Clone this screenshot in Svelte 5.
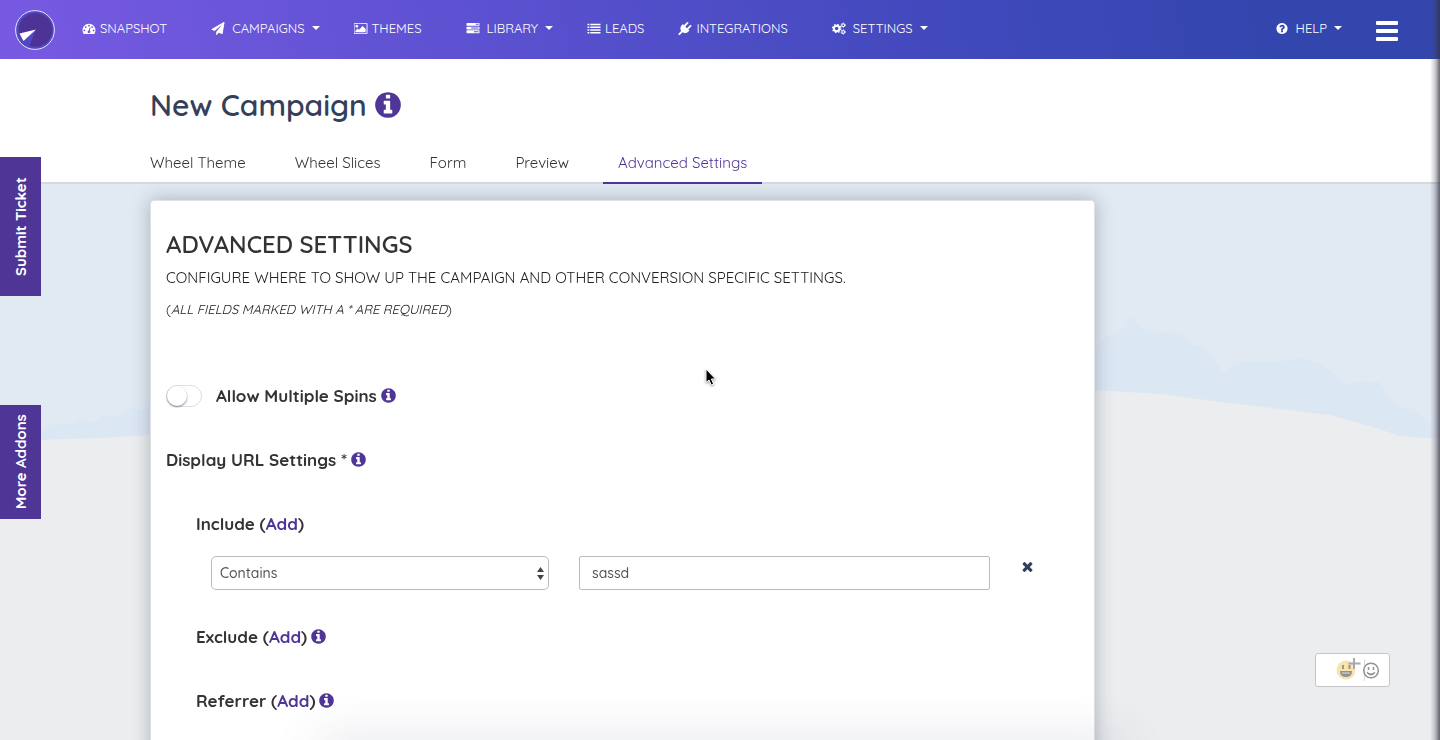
<script lang="ts">
  const icons = {
    dashboard: "M384 1152q0-53-37.5-90.5t-90.5-37.5-90.5 37.5-37.5 90.5 37.5 90.5 90.5 37.5 90.5-37.5 37.5-90.5zm192-448q0-53-37.5-90.5t-90.5-37.5-90.5 37.5-37.5 90.5 37.5 90.5 90.5 37.5 90.5-37.5 37.5-90.5zm428 481l101-382q6-26-7.5-48.5t-38.5-29.5-48 6.5-30 39.5l-101 382q-60 5-107 43.5t-63 98.5q-20 77 20 146t117 89 146-20 89-117q16-60-6-117t-72-91zm660-33q0-53-37.5-90.5t-90.5-37.5-90.5 37.5-37.5 90.5 37.5 90.5 90.5 37.5 90.5-37.5 37.5-90.5zm-640-640q0-53-37.5-90.5t-90.5-37.5-90.5 37.5-37.5 90.5 37.5 90.5 90.5 37.5 90.5-37.5 37.5-90.5zm448 192q0-53-37.5-90.5t-90.5-37.5-90.5 37.5-37.5 90.5 37.5 90.5 90.5 37.5 90.5-37.5 37.5-90.5zm320 448q0 261-141 483-19 29-54 29h-1402q-35 0-54-29-141-221-141-483 0-182 71-348t191-286 286-191 348-71 348 71 286 191 191 286 71 348z",
    plane: "M1764 11q33 24 27 64l-256 1536q-5 29-32 45-14 8-31 8-11 0-24-5l-453-185-242 295q-18 23-49 23-13 0-22-4-19-7-30.5-23.5t-11.5-36.5v-349l864-1059-1069 925-395-162q-37-14-40-55-2-40 32-59l1664-960q15-9 32-9 20 0 36 11z",
    picture: "M576 576q0 80-56 136t-136 56-136-56-56-136 56-136 136-56 136 56 56 136zm1024 384v448h-1408v-192l320-320 160 160 512-512zm96-704h-1600q-13 0-22.5 9.5t-9.5 22.5v1216q0 13 9.5 22.5t22.5 9.5h1600q13 0 22.5-9.5t9.5-22.5v-1216q0-13-9.5-22.5t-22.5-9.5zm160 32v1216q0 66-47 113t-113 47h-1600q-66 0-113-47t-47-113v-1216q0-66 47-113t113-47h1600q66 0 113 47t47 113z",
    plug: "M1755 453q37 38 37 90.5t-37 90.5l-401 400 150 150-160 160q-163 163-389.5 186.5t-411.5-100.5l-362 362h-181v-181l362-362q-124-185-100.5-411.5t186.5-389.5l160-160 150 150 400-401q38-37 91-37t90 37 37 90.5-37 90.5l-400 401 234 234 401-400q38-37 91-37t90 37z",
    info: "M1152 1376v-160q0-14-9-23t-23-9h-96v-512q0-14-9-23t-23-9h-320q-14 0-23 9t-9 23v160q0 14 9 23t23 9h96v320h-96q-14 0-23 9t-9 23v160q0 14 9 23t23 9h448q14 0 23-9t9-23zm-128-896v-160q0-14-9-23t-23-9h-192q-14 0-23 9t-9 23v160q0 14 9 23t23 9h192q14 0 23-9t9-23zm640 416q0 209-103 385.5t-279.5 279.5-385.5 103-385.5-103-279.5-279.5-103-385.5 103-385.5 279.5-279.5 385.5-103 385.5 103 279.5 279.5 103 385.5z",
    question: "M1024 1376v-192q0-14-9-23t-23-9h-192q-14 0-23 9t-9 23v192q0 14 9 23t23 9h192q14 0 23-9t9-23zm256-672q0-88-55.5-163t-138.5-116-170-41q-243 0-371 213-15 24 8 42l132 100q7 6 19 6 16 0 25-12 53-68 86-92 34-24 86-24 48 0 85.5 26t37.5 59q0 38-20 61t-68 45q-63 28-115.5 86.5t-52.5 125.5v36q0 14 9 23t23 9h192q14 0 23-9t9-23q0-19 21.5-49.5t54.5-49.5q32-18 49-28.5t46-35 44.5-48 28-60.5 12.5-81zm384 192q0 209-103 385.5t-279.5 279.5-385.5 103-385.5-103-279.5-279.5-103-385.5 103-385.5 279.5-279.5 385.5-103 385.5 103 279.5 279.5 103 385.5z",
    times: "M1490 1322q0 40-28 68l-136 136q-28 28-68 28t-68-28l-294-294-294 294q-28 28-68 28t-68-28l-136-136q-28-28-28-68t28-68l294-294-294-294q-28-28-28-68t28-68l136-136q28-28 68-28t68 28l294 294 294-294q28-28 68-28t68 28l136 136q28 28 28 68t-28 68l-294 294 294 294q28 28 28 68z",
    list: "M0 240h256v192h-256zM384 240h1408v192h-1408zM0 624h256v192h-256zM384 624h1408v192h-1408zM0 1008h256v192h-256zM384 1008h1408v192h-1408zM0 1392h256v192h-256zM384 1392h1408v192h-1408z",
    tasks: "M1024 1408h640v-128h-640v128zm-384-512h1024v-128h-1024v128zm640-512h384v-128h-384v128zm512 832v256q0 26-19 45t-45 19h-1664q-26 0-45-19t-19-45v-256q0-26 19-45t45-19h1664q26 0 45 19t19 45zm0-512v256q0 26-19 45t-45 19h-1664q-26 0-45-19t-19-45v-256q0-26 19-45t45-19h1664q26 0 45 19t19 45zm0-512v256q0 26-19 45t-45 19h-1664q-26 0-45-19t-19-45v-256q0-26 19-45t45-19h1664q26 0 45 19t19 45z",
  };

  const menu = [
    { label: "Snapshot", icon: "dashboard", dropdown: false },
    { label: "Campaigns", icon: "plane", dropdown: true },
    { label: "Themes", icon: "picture", dropdown: false },
    { label: "Library", icon: "tasks", dropdown: true },
    { label: "Leads", icon: "list", dropdown: false },
    { label: "Integrations", icon: "plug", dropdown: false },
    { label: "Settings", icon: "cogs", dropdown: true },
  ];

  const tabs = ["Wheel Theme", "Wheel Slices", "Form", "Preview", "Advanced Settings"];

  let activeTab = $state("Advanced Settings");
  let multipleSpins = $state(false);
  let rules = $state([{ match: "Contains", value: "sassd" }]);

  function addRule() {
    rules.push({ match: "Contains", value: "" });
  }

  function removeRule(index: number) {
    rules.splice(index, 1);
  }
</script>

{#snippet icon(name: string)}
  {#if name === "cogs"}
    <svg class="icon" viewBox="0 0 15 14" fill="none" stroke="currentColor" aria-hidden="true">
      <circle cx="5" cy="7" r="3" stroke-width="2.2" />
      <circle cx="5" cy="7" r="4.4" stroke-width="1.4" stroke-dasharray="1.73 1.73" />
      <circle cx="12" cy="3.4" r="1.5" stroke-width="1.2" />
      <circle cx="12" cy="3.4" r="2.3" stroke-width="0.9" stroke-dasharray="1.2 1.2" />
      <circle cx="12" cy="10.7" r="1.5" stroke-width="1.2" />
      <circle cx="12" cy="10.7" r="2.3" stroke-width="0.9" stroke-dasharray="1.2 1.2" />
    </svg>
  {:else}
    <svg class="icon" viewBox={name === "picture" ? "0 0 1920 1792" : "0 0 1792 1792"} fill="currentColor" aria-hidden="true">
      <path d={icons[name]} />
    </svg>
  {/if}
{/snippet}

<!-- snowy hill behind the page -->
<svg class="scene" viewBox="0 0 1440 740" preserveAspectRatio="none" aria-hidden="true">
  <rect width="1440" height="740" fill="#e1e9f3" />
  <path fill="#dbe7f3" d="M0 432l20-3 21 1 14-6 14 1 10-5 14 2 12-7 12 1 12-8 14 2 12-8v45H0zM1095 348l12-12 8-4 10-4 8-12 8 13 14 4 14-1 14 4 10 9 12 4 10 12 8 12 12-10 20-2 24 1 20-4 22 6 16 12 8 10 14-5 20 1 10 14 8 10 18 4 14 12 4 22v10H1095z" />
  <path fill="#ebedef" d="M0 442L60 439 100 438 150 435 500 390H1095L1110 391 1160 394 1230 403 1330 415 1370 426 1400 436 1440 439V740H0z" />
</svg>

<nav class="navbar">
  <a class="logo" href="#home" aria-label="Home">
    <svg viewBox="0 0 40 40">
      <circle cx="20" cy="20" r="19.4" fill="#5249c2" stroke="#e7e5fa" />
      <circle cx="20.5" cy="20" r="16.8" fill="#4d3396" />
      <path d="M20.500 20L4.500 25A17 17 0 0 0 14.500 36z" fill="#5249c2" />
      <path d="M21 19.500L4.500 23.500 8.500 31z" fill="#fff" />
    </svg>
  </a>
  <ul class="menu">
    {#each menu as item}
      <li class:dropdown={item.dropdown}>
        <a href="#{item.label.toLowerCase()}">
          {@render icon(item.icon)}
          <span>{item.label}</span>
          {#if item.dropdown}<i class="caret"></i>{/if}
        </a>
      </li>
    {/each}
  </ul>
  <ul class="menu right">
    <li class="dropdown">
      <a href="#help">{@render icon("question")}<span>Help</span><i class="caret"></i></a>
    </li>
  </ul>
  <button class="burger" aria-label="Menu"><i></i><i></i><i></i></button>
</nav>

<header class="page-header">
  <div class="container">
    <h1>New Campaign {@render icon("info")}</h1>
    <div class="tabs">
      {#each tabs as tab}
        <button class:active={tab === activeTab} onclick={() => (activeTab = tab)}>{tab}</button>
      {/each}
    </div>
  </div>
</header>

<main class="container">
  <section class="card">
    <h2>Advanced Settings</h2>
    <p class="lead">Configure where to show up the campaign and other conversion specific settings.</p>
    <p class="note">(<em>All fields marked with a * are required</em>)</p>

    <label class="row switch-row">
      <input class="switch" type="checkbox" bind:checked={multipleSpins} />
      <span>Allow Multiple Spins {@render icon("info")}</span>
    </label>

    <h3 class="row">Display URL Settings * {@render icon("info")}</h3>

    <div class="indent">
      <h3 class="row">Include (<button class="link" onclick={addRule}>Add</button>)</h3>
      {#each rules as rule, i}
        <div class="rule">
          <div class="select">
            <select bind:value={rule.match} aria-label="Match type">
              <option>Contains</option>
              <option>Equals</option>
            </select>
            <svg viewBox="0 0 7 13" aria-hidden="true"><path d="M3.500 0L7 5H0zM3.500 13L0 8H7z" fill="#444" /></svg>
          </div>
          <input type="text" bind:value={rule.value} aria-label="URL" />
          <button class="remove" aria-label="Remove" onclick={() => removeRule(i)}>{@render icon("times")}</button>
        </div>
      {/each}
      <h3 class="row">Exclude (<button class="link">Add</button>) {@render icon("info")}</h3>
      <h3 class="row">Referrer (<button class="link">Add</button>) {@render icon("info")}</h3>
    </div>
  </section>
</main>

<aside class="side-tabs">
  <button class="ticket">Submit Ticket</button>
  <button class="addons">More Addons</button>
</aside>

<button class="reactions" aria-label="Add reaction">
  <svg viewBox="0 0 46 26" fill="none" aria-hidden="true">
    <circle cx="12" cy="13" r="9.500" fill="#f8e3ac" />
    <path d="M9 8v4M15.500 8v4" stroke="#969696" stroke-width="2" />
    <path d="M6 14h12q0 6-6 6t-6-6z" fill="#929292" />
    <path d="M8 16h8" stroke="#ddd" />
    <path d="M20 1v11M14.500 6.500h12" stroke="#a8a8ae" stroke-width="2" />
    <path d="M30.500 2v22" stroke="#d5dde5" />
    <circle cx="37" cy="13.500" r="7.300" stroke="#929292" stroke-width="1.500" />
    <path d="M34.500 10v3M39.500 10v3" stroke="#929292" stroke-width="1.500" />
    <path d="M33 15q4 4 8 0-1 3-4 3t-4-3z" fill="#929292" stroke="#929292" />
  </svg>
</button>

<svg class="cursor" viewBox="0 0 12 19" aria-hidden="true">
  <path d="M1 1V14.500L4 12 6.200 17 8.600 16 6.400 11H10.500z" fill="#000" stroke="#fff" />
</svg>
<div class="bottom-glow"></div>
<div class="edge-shade"></div>

<style>
  :global(body) {
    margin: 0;
    font-family: Quicksand, Lato, "Open Sans", sans-serif;
    font-size: 16px;
    color: #333;
    background: #ebedef;
  }

  :global(#app) {
    height: 100vh;
    overflow: hidden;
  }

  button, input, select {
    font-family: inherit;
    font-weight: inherit;
    box-sizing: border-box;
  }

  button {
    border: none;
    background: none;
    padding: 0;
    color: inherit;
    cursor: pointer;
  }

  h1, h2, h3, p, ul {
    margin: 0;
    padding: 0;
  }

  .icon {
    width: 1em;
    height: 1em;
    flex: none;
  }

  .scene {
    position: fixed;
    z-index: -1;
    inset: 0;
    width: 100%;
    height: 100%;
  }

  /* top bar */
  .navbar {
    display: flex;
    align-items: center;
    height: 59px;
    padding: 0 42px 0 15px;
    color: #fff;
    background: linear-gradient(80deg, #785ae2 0%, #5850ce 38%, #4149bc 66%, #3346ae 88%);
  }

  .logo, .logo svg {
    display: block;
    width: 40px;
    height: 40px;
  }

  .menu {
    display: flex;
    list-style: none;
    margin-left: 10px;
    padding-bottom: 3px;
  }

  .menu a {
    display: flex;
    align-items: center;
    gap: 4px;
    padding: 0 17px;
    font-size: 13px;
    line-height: 20px;
    text-transform: uppercase;
    text-decoration: none;
    color: inherit;
  }

  .menu .icon {
    width: 14px;
  }

  .menu .dropdown a {
    gap: 7px;
    padding-left: 27px;
  }

  .caret {
    border: 4px solid transparent;
    border-top-color: currentColor;
    border-bottom: none;
  }

  .menu.right {
    margin-left: auto;
  }

  .burger {
    display: flex;
    flex-direction: column;
    gap: 4px;
    margin: 3px 0 0 17px;
  }

  .burger i {
    width: 22px;
    height: 4px;
    border-radius: 1px;
    background: #fff;
  }

  /* title and tabs */
  .container {
    max-width: 1140px;
    margin: 0 auto;
  }

  .page-header {
    background: #fff;
    border-bottom: 2px solid #d5dade;
  }

  h1 {
    display: flex;
    align-items: center;
    gap: 6px;
    padding-top: 26px;
    font-size: 30px;
    font-weight: 600;
    line-height: 40px;
    color: #34405a;
  }

  h1 .icon, h3 .icon, .switch-row .icon {
    color: #4f3596;
  }

  .tabs {
    display: flex;
    gap: 19px;
    margin: 16px 0 -2px -15px;
  }

  .tabs button {
    padding: 11px 15px 8px;
    border-bottom: 2px solid transparent;
    font-size: 15px;
    line-height: 22px;
    color: #303338;
  }

  .tabs .active {
    color: #4f3596;
    border-bottom-color: #4f3596;
  }

  /* settings card */
  .card {
    box-sizing: border-box;
    max-width: 945px;
    min-height: 640px;
    margin-top: 16px;
    padding: 27px 15px;
    background: #fff;
    border: 1px solid #dfe1e8;
    border-radius: 4px;
    box-shadow: 0 0 18px rgba(60, 70, 80, 0.35);
  }

  h2 {
    font-size: 24px;
    font-weight: 600;
    line-height: 32px;
    text-transform: uppercase;
  }

  .lead {
    margin-top: 5px;
    font-size: 15px;
    line-height: 26px;
    text-transform: uppercase;
    color: #222;
  }

  .note {
    margin: 7px 0 64px;
    font-size: 13px;
    line-height: 22px;
    text-transform: uppercase;
    color: #222;
  }

  .row {
    display: block;
    margin-bottom: 40px;
    font-size: 17px;
    font-weight: 700;
    line-height: 24px;
  }

  .row .icon {
    margin-left: -2px;
    vertical-align: -2px;
  }

  .switch-row {
    display: flex;
    align-items: center;
    gap: 14px;
  }

  .switch {
    appearance: none;
    width: 36px;
    height: 22px;
    margin: 0;
    border: 1px solid #dcdfe3;
    border-radius: 11px;
    background: #fff;
  }

  .switch::before {
    content: "";
    display: block;
    width: 20px;
    height: 20px;
    border-radius: 50%;
    background: #fff;
    box-shadow: 0 1px 2px rgba(40, 50, 70, 0.6);
  }

  .switch:checked {
    background: #4f3596;
  }

  .switch:checked::before {
    margin-left: auto;
  }

  .indent {
    padding-left: 30px;
  }

  .link {
    font-size: inherit;
    color: #4f3596;
  }

  .rule {
    display: grid;
    grid-template-columns: 338fr 411fr 44fr;
    gap: 30px;
    margin: -20px 15px 35px;
  }

  .select {
    position: relative;
  }

  .select select, .rule input {
    width: 100%;
    height: 34px;
    border: 1px solid #babcc2;
    background: #fff;
    font-size: 14px;
    font-weight: 500;
    color: #50535a;
  }

  .select select {
    appearance: none;
    padding: 0 8px;
    border-radius: 5px;
  }

  .select svg {
    position: absolute;
    right: 5px;
    top: 11px;
    width: 7px;
    height: 13px;
    pointer-events: none;
  }

  .rule input {
    padding: 0 12px;
    border-radius: 2px;
  }

  .remove {
    height: 24px;
    font-size: 15px;
    color: #34405a;
    text-align: left;
  }

  /* things floating over the page */
  .side-tabs {
    position: fixed;
    top: 157px;
    left: 0;
    display: flex;
    flex-direction: column;
    gap: 109px;
  }

  .side-tabs button {
    width: 41px;
    writing-mode: vertical-rl;
    transform: rotate(180deg);
    background: #4f3596;
    font-size: 15px;
    font-weight: 700;
    line-height: 41px;
    color: #fff;
  }

  .ticket {
    height: 139px;
  }

  .addons {
    height: 114px;
  }

  .reactions {
    position: fixed;
    right: 50px;
    bottom: 53px;
    display: flex;
    align-items: center;
    justify-content: flex-end;
    width: 75px;
    height: 34px;
    padding-right: 9px;
    border: 1px solid #c4c5c8;
    border-radius: 3px;
    background: #fff;
  }

  .reactions svg {
    width: 46px;
    height: 26px;
  }

  .cursor {
    position: fixed;
    left: 705px;
    top: 368px;
    width: 12px;
    height: 19px;
    pointer-events: none;
    filter: drop-shadow(0 1px 1px rgba(0, 0, 0, 0.4));
  }

  .bottom-glow {
    position: fixed;
    left: 50%;
    bottom: -20px;
    width: 780px;
    height: 10px;
    margin-left: -390px;
    box-shadow: 0 0 50px 10px rgba(60, 70, 100, 0.16);
    pointer-events: none;
  }

  .edge-shade {
    position: fixed;
    top: 0;
    right: 0;
    bottom: 0;
    width: 10px;
    background: linear-gradient(to right, transparent, rgba(60, 60, 75, 0.25) 50%, rgba(50, 50, 62, 0.75));
    pointer-events: none;
  }
</style>
